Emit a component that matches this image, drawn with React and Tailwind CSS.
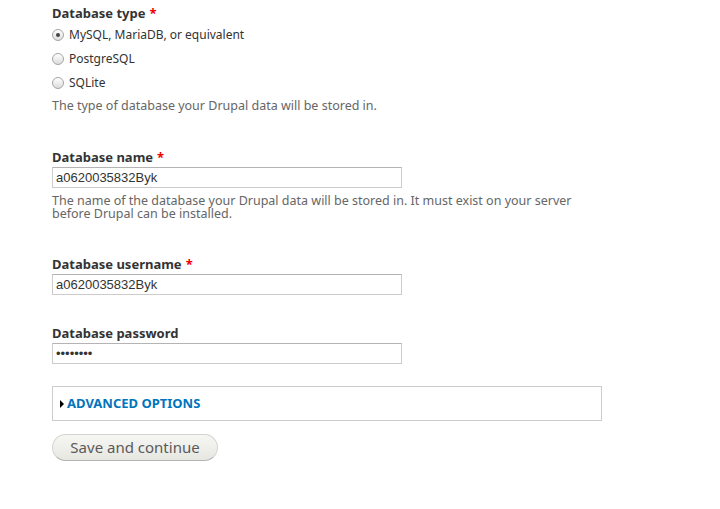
import { useState } from 'react';

const FONT = { fontFamily: '"Noto Sans", "DejaVu Sans", sans-serif' };

function Required() {
  return <span className="text-[#e00] ml-1" title="This field is required.">*</span>;
}

function Radio({ label, checked, onChange }) {
  return (
    <label className="flex h-6 items-center gap-[5px] text-[12px] text-[#333]">
      <span
        className="flex h-[12px] w-[12px] items-center justify-center rounded-full border border-[#a5a5a5] bg-gradient-to-b from-[#fff] to-[#dcdcdc]"
        onClick={onChange}
      >
        {checked && <span className="h-[4px] w-[4px] rounded-full bg-[#444]" />}
      </span>
      <span>{label}</span>
    </label>
  );
}

function TextField({ label, required, value, type = 'text', description, className = '' }) {
  return (
    <div className={className}>
      <div className="h-[18px] text-[13px] font-bold leading-[18px] text-[#333]">
        {label}
        {required && <Required />}
      </div>
      <input
        type={type}
        defaultValue={value}
        className="mt-px block h-[21px] w-[350px] border border-[#ccc] border-t-[#b4b4b4] bg-white px-[3px] text-[13px] text-[#333] outline-none"
        style={{ fontFamily: '"Liberation Sans", Arial, sans-serif' }}
      />
      {description && (
        <p className="mt-[6px] max-w-[525px] text-[12.5px] leading-[13px] text-[#666]">{description}</p>
      )}
    </div>
  );
}

export default function App() {
  const [dbType, setDbType] = useState('mysql');

  return (
    <div className="min-h-[509px] bg-white" style={FONT}>
      <div className="w-[602px] pl-[52px] pt-[4px]">
        <div className="h-[18px] text-[13px] font-bold leading-[18px] text-[#333]">
          Database type
          <Required />
        </div>
        <div className="mt-px">
          <Radio label="MySQL, MariaDB, or equivalent" checked={dbType === 'mysql'} onChange={() => setDbType('mysql')} />
          <Radio label="PostgreSQL" checked={dbType === 'pgsql'} onChange={() => setDbType('pgsql')} />
          <Radio label="SQLite" checked={dbType === 'sqlite'} onChange={() => setDbType('sqlite')} />
        </div>
        <p className="mt-[3px] text-[12.5px] leading-[16px] text-[#666]">
          The type of database your Drupal data will be stored in.
        </p>

        <TextField
          className="mt-[34px]"
          label="Database name"
          required
          value="a0620035832Byk"
          description="The name of the database your Drupal data will be stored in. It must exist on your server before Drupal can be installed."
        />

        <TextField className="mt-[35px]" label="Database username" required value="a0620035832Byk" />

        <TextField className="mt-[29px]" label="Database password" type="password" value="abcdefgh" />

        <div className="mt-[22px] flex h-[35px] items-center border border-[#ccc] px-[7px]">
          <span className="mr-[3px] h-0 w-0 border-y-[4px] border-l-[4px] border-y-transparent border-l-black" />
          <a href="#" className="text-[13px] font-bold uppercase text-[#0074bd]">
            Advanced options
          </a>
        </div>

        <button
          type="button"
          className="mt-[13px] h-[27px] w-[166px] rounded-full border border-[#d4d4d4] border-b-[#b4b4b4] bg-gradient-to-b from-[#f6f6f3] to-[#e7e7e2] text-[15px] text-[#5a5a5a]"
        >
          Save and continue
        </button>
      </div>
    </div>
  );
}
